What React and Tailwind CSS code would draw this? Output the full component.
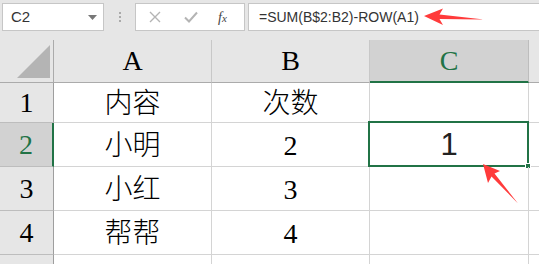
import React from "react";

const serif = { fontFamily: '"Liberation Serif", "Noto Sans CJK SC", serif' };

const cols = ["A", "B", "C"];
const rows = [
  { n: 1, a: "内容", b: "次数", c: "" },
  { n: 2, a: "小明", b: "2", c: "1" },
  { n: 3, a: "小红", b: "3", c: "" },
  { n: 4, a: "帮帮", b: "4", c: "" },
];

const Toolbar = () => (
  <div className="h-[40px] bg-[#e6e6e6] flex items-start pt-[3px] font-['Liberation_Sans',sans-serif]">
    {/* name box */}
    <div className="ml-[2px] w-[102px] h-[28px] bg-white border border-[#c6c6c6] flex items-center justify-between pl-[8px] pr-[6px]">
      <span className="text-[15px] text-[#333]">C2</span>
      <svg width="9" height="5" viewBox="0 0 9 5">
        <path d="M0 0h9L4.5 5z" fill="#777" />
      </svg>
    </div>
    <div className="w-[31px] h-[28px] flex flex-col items-center justify-center gap-[2px]">
      <span className="w-[2px] h-[2px] bg-[#aaa]" />
      <span className="w-[2px] h-[2px] bg-[#aaa]" />
      <span className="w-[2px] h-[2px] bg-[#aaa]" />
    </div>
    {/* cancel / enter / fx */}
    <div className="w-[110px] h-[28px] bg-white border border-[#c6c6c6] flex items-center">
      <svg className="ml-[13px]" width="12" height="12" viewBox="0 0 12 12">
        <path d="M1 1l10 10M11 1L1 11" stroke="#b4b4b4" strokeWidth="1.4" />
      </svg>
      <svg className="ml-[23px]" width="14" height="12" viewBox="0 0 14 12">
        <path d="M1 6.5l4 4L13 1.5" stroke="#b4b4b4" strokeWidth="2" fill="none" />
      </svg>
      <span className="ml-[20px] text-[14px] italic text-[#444]" style={serif}>
        f<span className="text-[11px]">x</span>
      </span>
    </div>
    {/* formula */}
    <div className="ml-[3px] flex-1 h-[28px] bg-white border border-r-0 border-[#c6c6c6] flex items-center pl-[10px]">
      <span className="text-[14px] text-[#333]">=SUM(B$2:B2)-ROW(A1)</span>
    </div>
  </div>
);

const Sheet = () => (
  <div className="grid grid-cols-[54px_158px_158px_159px_1fr] grid-rows-[43px_40px_44px_44px_44px_1fr] h-[224px] bg-white font-light" style={serif}>
    {/* corner */}
    <div className="bg-[#e6e6e6] border-r border-b border-[#ababab] relative">
      <svg className="absolute left-[17px] top-[5px]" width="33" height="33" viewBox="0 0 33 33">
        <path d="M0 33L33 0v33z" fill="#b4b4b4" />
      </svg>
    </div>
    {cols.map((c) => (
      <div
        key={c}
        className={
          c === "C"
            ? "bg-[#d2d2d2] border-r border-[#bdbdbd] border-b-2 border-b-[#217346] flex items-center justify-center text-[28px] text-[#217346]"
            : "bg-[#e6e6e6] border-r border-[#c8c8c8] border-b border-b-[#ababab] flex items-center justify-center text-[28px] text-black"
        }
      >
        {c}
      </div>
    ))}
    <div className="bg-[#e6e6e6] border-b border-[#ababab]" />

    {rows.map((r) => (
      <React.Fragment key={r.n}>
        <div
          className={
            r.n === 2
              ? "bg-[#d2d2d2] border-r-2 border-r-[#217346] border-b border-[#bdbdbd] flex items-center justify-center text-[28px] text-[#217346]"
              : "bg-[#e6e6e6] border-r border-r-[#9e9e9e] border-b border-[#bdbdbd] flex items-center justify-center text-[28px] text-black"
          }
        >
          {r.n}
        </div>
        <div className="border-r border-b border-[#d4d4d4] flex items-center justify-center text-[28px] text-black pt-[3px]">
          {r.a}
        </div>
        <div className="border-r border-b border-[#d4d4d4] flex items-center justify-center text-[28px] text-black pt-[3px]">
          {r.b}
        </div>
        <div className="border-r border-b border-[#d4d4d4] flex items-center justify-center relative">
          {r.c && (
            <span className="text-[31px] text-[#222] font-['Liberation_Sans',sans-serif] pt-[2px]">{r.c}</span>
          )}
          {r.n === 2 && (
            <div className="absolute -left-[2px] -top-[2px] w-[161px] h-[46px] border-2 border-[#217346]">
              <span className="absolute -right-[4px] -bottom-[4px] w-[6px] h-[6px] bg-[#217346] border border-white" />
            </div>
          )}
        </div>
        <div className="border-b border-[#d4d4d4]" />
      </React.Fragment>
    ))}

    <div className="bg-[#e6e6e6] border-r border-r-[#9e9e9e]" />
    <div className="border-r border-[#d4d4d4]" />
    <div className="border-r border-[#d4d4d4]" />
    <div className="border-r border-[#d4d4d4]" />
    <div />
  </div>
);

// red arrows drawn over the screenshot
const Arrows = () => (
  <svg className="absolute inset-0 pointer-events-none" width="539" height="264" viewBox="0 0 539 264">
    <path d="M424 16L443 8.5L439.5 14.5L484 19.5L439.5 19L443 25z" fill="#ff3b3b" />
    <path d="M483 164L500 171L494.5 173.5L518 203.5L491.5 176.5L488 183z" fill="#ff3b3b" />
  </svg>
);

export default function App() {
  return (
    <div className="relative w-[539px] h-[264px] overflow-hidden bg-white">
      <Toolbar />
      <Sheet />
      <Arrows />
    </div>
  );
}
